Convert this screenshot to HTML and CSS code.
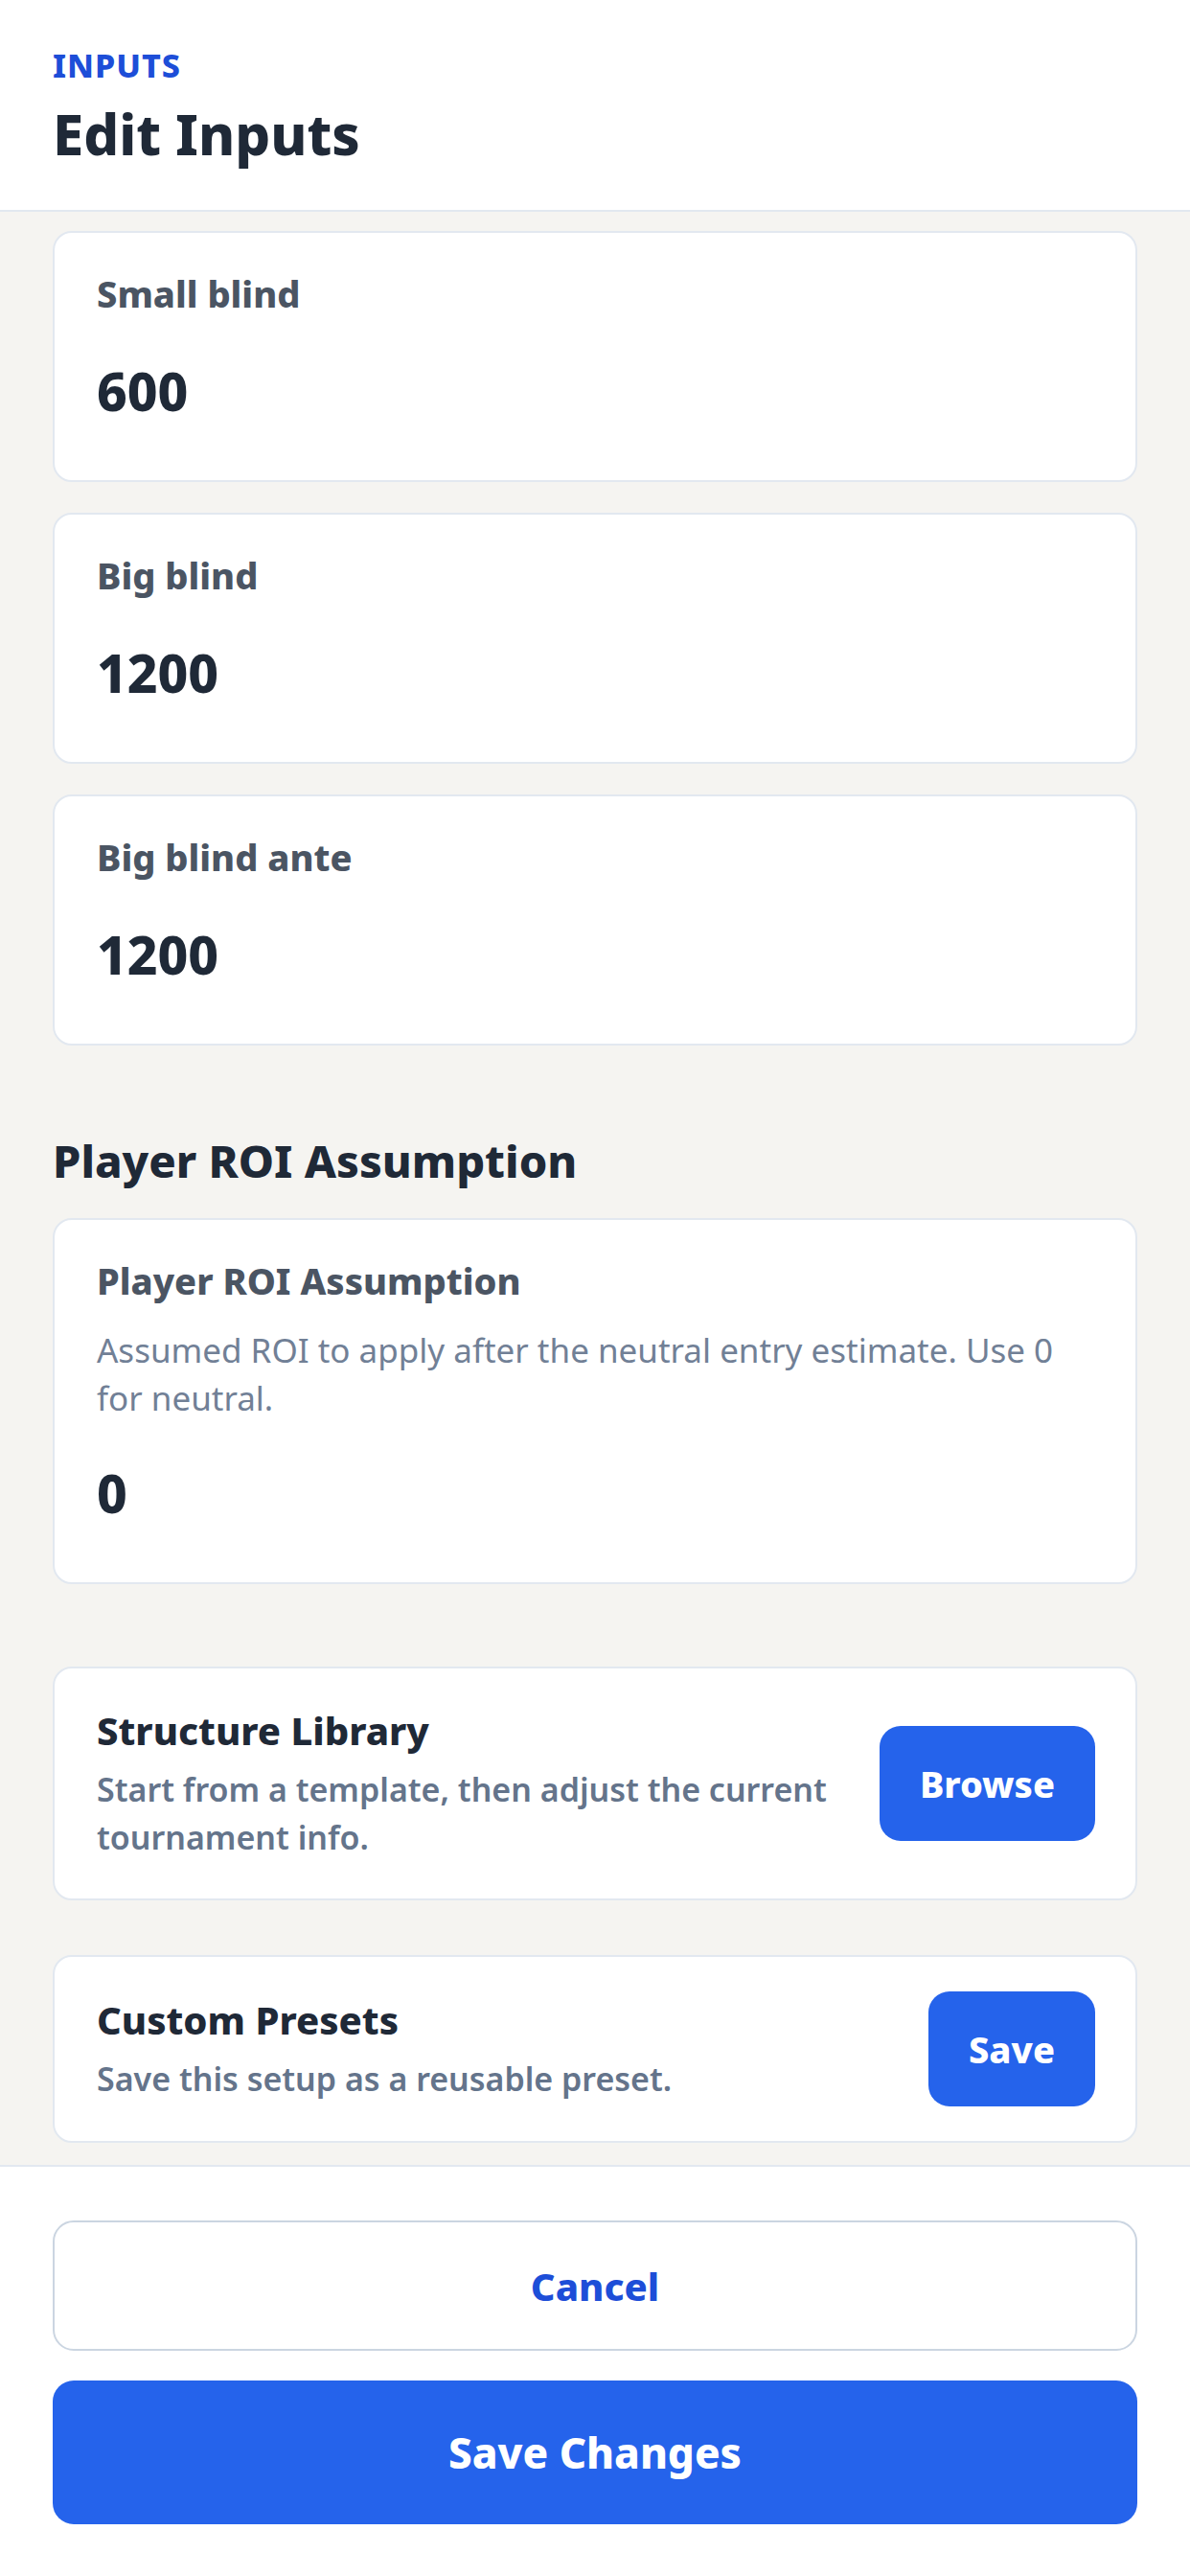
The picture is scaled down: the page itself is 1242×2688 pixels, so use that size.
FILE: index.html
```html
<!DOCTYPE html>
<html lang="en">
<head>
    <meta charset="UTF-8">
    <meta name="viewport" content="width=device-width, initial-scale=1.0">
    <title>Edit Inputs</title>
    <link rel="stylesheet" href="styles.css">
</head>
<body>
    <div class="sheet">
        <header class="sheet-header">
            <div class="eyebrow">INPUTS</div>
            <h1>Edit Inputs</h1>
        </header>

        <main class="sheet-body">
            <div class="field-list">
                <div class="field-card">
                    <div class="field-label">Small blind</div>
                    <div class="field-value">600</div>
                </div>
                <div class="field-card">
                    <div class="field-label">Big blind</div>
                    <div class="field-value">1200</div>
                </div>
                <div class="field-card">
                    <div class="field-label">Big blind ante</div>
                    <div class="field-value">1200</div>
                </div>
            </div>

            <h2 class="section-title">Player ROI Assumption</h2>
            <div class="field-card">
                <div class="field-label">Player ROI Assumption</div>
                <div class="field-desc">Assumed ROI to apply after the neutral entry estimate. Use 0 for neutral.</div>
                <div class="field-value">0</div>
            </div>

            <div class="tool-card library">
                <div class="tool-text">
                    <div class="tool-title">Structure Library</div>
                    <div class="tool-desc">Start from a template, then adjust the current tournament info.</div>
                </div>
                <button class="btn-small">Browse</button>
            </div>

            <div class="tool-card presets">
                <div class="tool-text">
                    <div class="tool-title">Custom Presets</div>
                    <div class="tool-desc">Save this setup as a reusable preset.</div>
                </div>
                <button class="btn-small">Save</button>
            </div>
        </main>

        <footer class="sheet-footer">
            <button class="btn-cancel">Cancel</button>
            <button class="btn-save">Save Changes</button>
        </footer>
    </div>
</body>
</html>
```

FILE: styles.css
```css
* {
    margin: 0;
    padding: 0;
    box-sizing: border-box;
}

body {
    font-family: 'Noto Sans', 'Open Sans', sans-serif;
    color: #1f2937;
    background: #ffffff;
}

.sheet {
    height: 100vh;
    display: flex;
    flex-direction: column;
    overflow: hidden;
}

/* Cabeçalho */
.sheet-header {
    padding: 48px 55px 43px;
    border-bottom: 2px solid #e2e8f0;
    background: #ffffff;
}

.eyebrow {
    font-size: 34px;
    line-height: 40px;
    font-weight: 800;
    letter-spacing: 1px;
    color: #1d4ed8;
    margin-bottom: 16px;
}

.sheet-header h1 {
    font-size: 58px;
    line-height: 72px;
    font-weight: 800;
    color: #1f2937;
}

/* Conteúdo rolável */
.sheet-body {
    flex: 1;
    overflow: hidden;
    background: #f5f4f1;
    padding: 20px 55px 24px;
}

.field-list {
    display: flex;
    flex-direction: column;
    gap: 32px;
}

.field-card {
    background: #ffffff;
    border: 2px solid #e2e8f0;
    border-radius: 20px;
    padding: 39px 44px 61px;
}

.field-label {
    font-size: 38px;
    line-height: 48px;
    font-weight: 800;
    color: #4b5563;
}

.field-desc {
    margin-top: 24px;
    font-size: 35px;
    line-height: 50px;
    color: #718096;
}

.field-value {
    margin-top: 46px;
    font-size: 55px;
    line-height: 64px;
    font-weight: 800;
    color: #1f2937;
}

.field-desc + .field-value {
    margin-top: 42px;
}

.section-title {
    margin: 91px 0 31px;
    font-size: 47px;
    line-height: 58px;
    font-weight: 800;
    color: #1f2937;
}

/* Biblioteca e presets */
.tool-card {
    display: flex;
    align-items: center;
    gap: 40px;
    background: #ffffff;
    border: 2px solid #e2e8f0;
    border-radius: 20px;
    padding: 39px 42px 39px 44px;
}

.library {
    margin-top: 86px;
}

.presets {
    margin-top: 57px;
    padding-top: 36px;
    padding-bottom: 36px;
}

.tool-text {
    flex: 1;
}

.tool-title {
    font-size: 40px;
    line-height: 52px;
    font-weight: 800;
    color: #1f2937;
}

.tool-desc {
    margin-top: 10px;
    font-size: 34px;
    line-height: 50px;
    font-weight: 600;
    color: #64748b;
}

button {
    font-family: inherit;
    cursor: pointer;
}

.btn-small {
    flex-shrink: 0;
    height: 120px;
    padding: 0 42px;
    border: none;
    border-radius: 22px;
    background: #2563eb;
    color: #ffffff;
    font-size: 38px;
    font-weight: 800;
}

/* Rodapé */
.sheet-footer {
    border-top: 2px solid #e2e8f0;
    background: #ffffff;
    padding: 56px 55px 54px;
    display: flex;
    flex-direction: column;
    gap: 31px;
}

.btn-cancel {
    height: 136px;
    border: 2px solid #cbd5e1;
    border-radius: 22px;
    background: #ffffff;
    color: #1d4ed8;
    font-size: 40px;
    font-weight: 800;
}

.btn-save {
    height: 150px;
    border: none;
    border-radius: 22px;
    background: #2563eb;
    color: #ffffff;
    font-size: 44px;
    font-weight: 800;
}
```
